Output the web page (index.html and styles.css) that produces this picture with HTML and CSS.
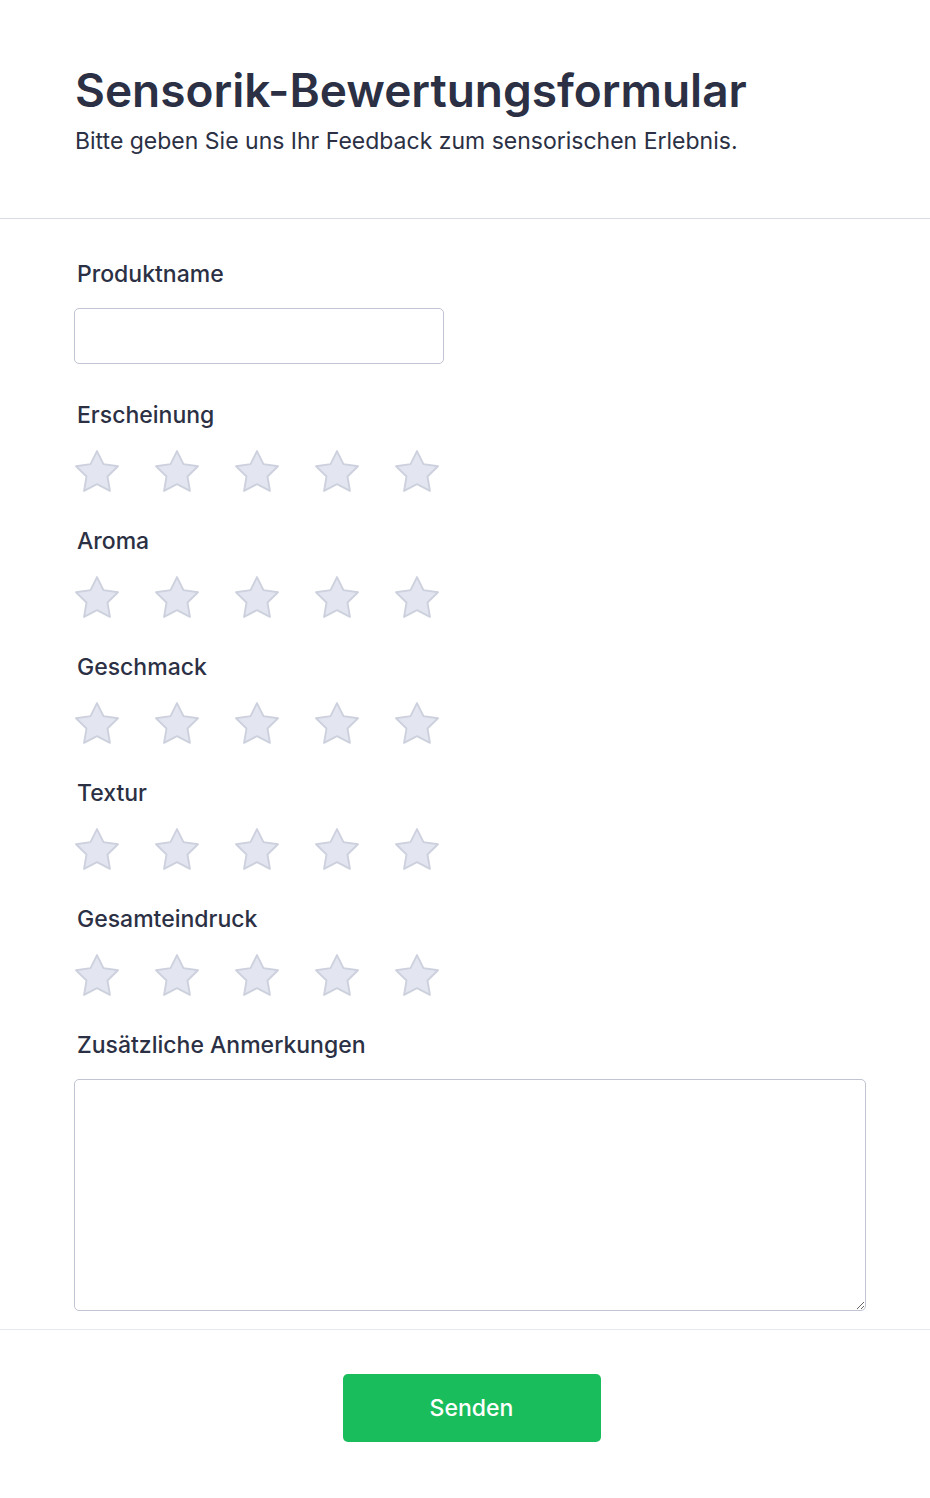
FILE: index.html
```html
<!DOCTYPE html>
<html lang="de">
<head>
<meta charset="utf-8">
<title>Sensorik-Bewertungsformular</title>
<link rel="stylesheet" href="styles.css">
</head>
<body>
<div class="page">
  <header class="header">
    <h1 class="title">Sensorik-Bewertungsformular</h1>
    <p class="subtitle">Bitte geben Sie uns Ihr Feedback zum sensorischen Erlebnis.</p>
  </header>
  <form class="form">
    <div class="fields">
      <div class="field">
        <label class="label" for="pn">Produktname</label>
        <input class="input" id="pn" type="text">
      </div>
      <div class="field rating">
        <span class="label">Erscheinung</span>
        <div class="stars">
          <svg class="star" viewBox="1.5 1.5 21 21"><path d="M12 2l3.09 6.26L22 9.27l-5 4.87 1.18 6.88L12 17.77l-6.18 3.25L7 14.14 2 9.27l6.91-1.01L12 2z"/></svg>
          <svg class="star" viewBox="1.5 1.5 21 21"><path d="M12 2l3.09 6.26L22 9.27l-5 4.87 1.18 6.88L12 17.77l-6.18 3.25L7 14.14 2 9.27l6.91-1.01L12 2z"/></svg>
          <svg class="star" viewBox="1.5 1.5 21 21"><path d="M12 2l3.09 6.26L22 9.27l-5 4.87 1.18 6.88L12 17.77l-6.18 3.25L7 14.14 2 9.27l6.91-1.01L12 2z"/></svg>
          <svg class="star" viewBox="1.5 1.5 21 21"><path d="M12 2l3.09 6.26L22 9.27l-5 4.87 1.18 6.88L12 17.77l-6.18 3.25L7 14.14 2 9.27l6.91-1.01L12 2z"/></svg>
          <svg class="star" viewBox="1.5 1.5 21 21"><path d="M12 2l3.09 6.26L22 9.27l-5 4.87 1.18 6.88L12 17.77l-6.18 3.25L7 14.14 2 9.27l6.91-1.01L12 2z"/></svg>
        </div>
      </div>
      <div class="field rating">
        <span class="label">Aroma</span>
        <div class="stars">
          <svg class="star" viewBox="1.5 1.5 21 21"><path d="M12 2l3.09 6.26L22 9.27l-5 4.87 1.18 6.88L12 17.77l-6.18 3.25L7 14.14 2 9.27l6.91-1.01L12 2z"/></svg>
          <svg class="star" viewBox="1.5 1.5 21 21"><path d="M12 2l3.09 6.26L22 9.27l-5 4.87 1.18 6.88L12 17.77l-6.18 3.25L7 14.14 2 9.27l6.91-1.01L12 2z"/></svg>
          <svg class="star" viewBox="1.5 1.5 21 21"><path d="M12 2l3.09 6.26L22 9.27l-5 4.87 1.18 6.88L12 17.77l-6.18 3.25L7 14.14 2 9.27l6.91-1.01L12 2z"/></svg>
          <svg class="star" viewBox="1.5 1.5 21 21"><path d="M12 2l3.09 6.26L22 9.27l-5 4.87 1.18 6.88L12 17.77l-6.18 3.25L7 14.14 2 9.27l6.91-1.01L12 2z"/></svg>
          <svg class="star" viewBox="1.5 1.5 21 21"><path d="M12 2l3.09 6.26L22 9.27l-5 4.87 1.18 6.88L12 17.77l-6.18 3.25L7 14.14 2 9.27l6.91-1.01L12 2z"/></svg>
        </div>
      </div>
      <div class="field rating">
        <span class="label">Geschmack</span>
        <div class="stars">
          <svg class="star" viewBox="1.5 1.5 21 21"><path d="M12 2l3.09 6.26L22 9.27l-5 4.87 1.18 6.88L12 17.77l-6.18 3.25L7 14.14 2 9.27l6.91-1.01L12 2z"/></svg>
          <svg class="star" viewBox="1.5 1.5 21 21"><path d="M12 2l3.09 6.26L22 9.27l-5 4.87 1.18 6.88L12 17.77l-6.18 3.25L7 14.14 2 9.27l6.91-1.01L12 2z"/></svg>
          <svg class="star" viewBox="1.5 1.5 21 21"><path d="M12 2l3.09 6.26L22 9.27l-5 4.87 1.18 6.88L12 17.77l-6.18 3.25L7 14.14 2 9.27l6.91-1.01L12 2z"/></svg>
          <svg class="star" viewBox="1.5 1.5 21 21"><path d="M12 2l3.09 6.26L22 9.27l-5 4.87 1.18 6.88L12 17.77l-6.18 3.25L7 14.14 2 9.27l6.91-1.01L12 2z"/></svg>
          <svg class="star" viewBox="1.5 1.5 21 21"><path d="M12 2l3.09 6.26L22 9.27l-5 4.87 1.18 6.88L12 17.77l-6.18 3.25L7 14.14 2 9.27l6.91-1.01L12 2z"/></svg>
        </div>
      </div>
      <div class="field rating">
        <span class="label">Textur</span>
        <div class="stars">
          <svg class="star" viewBox="1.5 1.5 21 21"><path d="M12 2l3.09 6.26L22 9.27l-5 4.87 1.18 6.88L12 17.77l-6.18 3.25L7 14.14 2 9.27l6.91-1.01L12 2z"/></svg>
          <svg class="star" viewBox="1.5 1.5 21 21"><path d="M12 2l3.09 6.26L22 9.27l-5 4.87 1.18 6.88L12 17.77l-6.18 3.25L7 14.14 2 9.27l6.91-1.01L12 2z"/></svg>
          <svg class="star" viewBox="1.5 1.5 21 21"><path d="M12 2l3.09 6.26L22 9.27l-5 4.87 1.18 6.88L12 17.77l-6.18 3.25L7 14.14 2 9.27l6.91-1.01L12 2z"/></svg>
          <svg class="star" viewBox="1.5 1.5 21 21"><path d="M12 2l3.09 6.26L22 9.27l-5 4.87 1.18 6.88L12 17.77l-6.18 3.25L7 14.14 2 9.27l6.91-1.01L12 2z"/></svg>
          <svg class="star" viewBox="1.5 1.5 21 21"><path d="M12 2l3.09 6.26L22 9.27l-5 4.87 1.18 6.88L12 17.77l-6.18 3.25L7 14.14 2 9.27l6.91-1.01L12 2z"/></svg>
        </div>
      </div>
      <div class="field rating">
        <span class="label">Gesamteindruck</span>
        <div class="stars">
          <svg class="star" viewBox="1.5 1.5 21 21"><path d="M12 2l3.09 6.26L22 9.27l-5 4.87 1.18 6.88L12 17.77l-6.18 3.25L7 14.14 2 9.27l6.91-1.01L12 2z"/></svg>
          <svg class="star" viewBox="1.5 1.5 21 21"><path d="M12 2l3.09 6.26L22 9.27l-5 4.87 1.18 6.88L12 17.77l-6.18 3.25L7 14.14 2 9.27l6.91-1.01L12 2z"/></svg>
          <svg class="star" viewBox="1.5 1.5 21 21"><path d="M12 2l3.09 6.26L22 9.27l-5 4.87 1.18 6.88L12 17.77l-6.18 3.25L7 14.14 2 9.27l6.91-1.01L12 2z"/></svg>
          <svg class="star" viewBox="1.5 1.5 21 21"><path d="M12 2l3.09 6.26L22 9.27l-5 4.87 1.18 6.88L12 17.77l-6.18 3.25L7 14.14 2 9.27l6.91-1.01L12 2z"/></svg>
          <svg class="star" viewBox="1.5 1.5 21 21"><path d="M12 2l3.09 6.26L22 9.27l-5 4.87 1.18 6.88L12 17.77l-6.18 3.25L7 14.14 2 9.27l6.91-1.01L12 2z"/></svg>
        </div>
      </div>
      <div class="field">
        <label class="label" for="notes">Zusätzliche Anmerkungen</label>
        <textarea class="textarea" id="notes"></textarea>
      </div>
    </div>
    <div class="footer">
      <button class="button" type="submit">Senden</button>
    </div>
  </form>
</div>
</body>
</html>
```

FILE: styles.css
```css
* { box-sizing: border-box; }
html, body { margin: 0; padding: 0; background: #ffffff; }
body {
  font-family: Inter, "Noto Sans", sans-serif;
  color: #2b3044;
}
.page { width: 930px; }
.header {
  padding: 61px 64px 62px 75px;
  border-bottom: 1px solid #d8dae4;
}
.title {
  margin: 0;
  font-size: 46px;
  line-height: 58px;
  font-weight: 600;
  color: #2b3044;
}
.subtitle {
  margin: 7px 0 0 0;
  font-size: 23px;
  line-height: 30px;
  font-weight: 400;
  color: #2b3044;
}
.fields {
  padding: 40px 64px 18px 74px;
  border-bottom: 1px solid #e6e8ef;
  display: flex;
  flex-direction: column;
  gap: 35px;
}
.field {
  display: flex;
  flex-direction: column;
  align-items: flex-start;
}
.rating + .rating,
.rating + .field { margin-top: -3px; }
.label {
  display: block;
  padding-left: 3px;
  font-size: 23px;
  line-height: 30px;
  font-weight: 500;
  color: #2b3044;
}
.input {
  margin-top: 19px;
  margin-bottom: 1px;
  width: 370px;
  height: 56px;
  border: 1px solid #c0c4d3;
  border-radius: 5px;
  background: #fff;
  font: inherit;
}
.stars {
  margin-top: 20px;
  display: flex;
  gap: 36px;
  padding-left: 1px;
}
.star {
  width: 44px;
  height: 44px;
  display: block;
}
.star path {
  fill: #e3e6f0;
  stroke: #cdd1de;
  stroke-width: 0.9;
  stroke-linejoin: round;
}
.textarea {
  margin-top: 19px;
  width: 792px;
  height: 232px;
  border: 1px solid #c0c4d3;
  border-radius: 5px;
  background: #fff;
  font: inherit;
  resize: vertical;
}
.footer {
  padding: 44px 64px 56px 74px;
  display: flex;
  justify-content: center;
}
.button {
  width: 258px;
  height: 68px;
  border: none;
  border-radius: 5px;
  background: #1abd5c;
  color: #ffffff;
  font-family: Inter, "Noto Sans", sans-serif;
  font-size: 23px;
  font-weight: 500;
  cursor: pointer;
  margin-left: 3px;
}
```
